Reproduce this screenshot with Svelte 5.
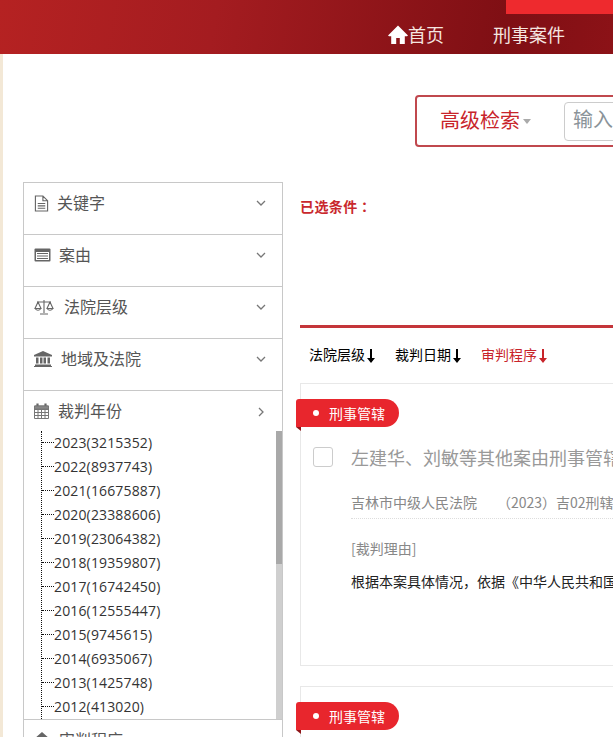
<script>
  const filters = [
    { label: '关键字', icon: 'file' },
    { label: '案由', icon: 'list' },
    { label: '法院层级', icon: 'scale' },
    { label: '地域及法院', icon: 'bank' }
  ];
  const years = [
    '2023(3215352)', '2022(8937743)', '2021(16675887)', '2020(23388606)',
    '2019(23064382)', '2018(19359807)', '2017(16742450)', '2016(12555447)',
    '2015(9745615)', '2014(6935067)', '2013(1425748)', '2012(413020)'
  ];
  const sorts = [
    { label: '法院层级', active: false },
    { label: '裁判日期', active: false },
    { label: '审判程序', active: true }
  ];
</script>

<div class="page">
  <header class="topbar">
    <div class="flag"></div>
    <nav class="nav">
      <a class="nav-home">
        <svg viewBox="0 0 20 19" width="20" height="19"><path d="M10 .5 0 10.500l1 .8h2.200V19h5v-6h3.600v6h5v-7.700H19l1-.8z" fill="#fff"/></svg>
        首页
      </a>
      <a>刑事案件</a>
    </nav>
  </header>

  <div class="search-row">
    <div class="search">
      <span class="search-type">高级检索<i class="caret"></i></span>
      <div class="search-input">输入案由、关键词、法院、当事人、律师</div>
    </div>
  </div>

  <div class="main">
    <aside class="side">
      {#each filters as f}
        <div class="filter">
          <span class="filter-icon {f.icon}">
            {#if f.icon === 'file'}
              <svg viewBox="0 0 16 18" width="15" height="17" fill="none" stroke="#666" stroke-width="1.2"><path d="M1.500 1h8l5 5v11h-13zM9.500 1v5h5M4 9h8M4 11.500h8M4 14h8"/></svg>
            {:else if f.icon === 'list'}
              <svg viewBox="0 0 17 14" width="17" height="14"><path d="M.5 1.500q0-1 1-1h14q1 0 1 1v11q0 1-1 1h-14q-1 0-1-1z" fill="#666"/><path d="M2 4h13v8H2z" fill="#fff"/><path d="M3 5.500h11M3 8h11M3 10.500h11" stroke="#666" stroke-width="1"/></svg>
            {:else if f.icon === 'scale'}
              <svg viewBox="0 0 20 16" width="20" height="16" fill="none" stroke="#666" stroke-width="1.100"><path d="M10 1v13M6 15h8M3 3h14M4 3 1 9.500h6zM16 3l-3 6.500h6zM1 9.500q3 3.500 6 0M13 9.500q3 3.500 6 0"/></svg>
            {:else}
              <svg viewBox="0 0 18 16" width="18" height="16" fill="#666"><path d="M9 0 18 4v1.500H0V4zM2 6.500h2.500v6H2zM6 6.500h2.500v6H6zM9.500 6.500H12v6H9.500zM13.500 6.500H16v6h-2.500zM1 13.500h16V15H1zM0 15h18v1H0z"/></svg>
            {/if}
          </span>
          <span class="filter-label">{f.label}</span>
          <svg class="chev" viewBox="0 0 10 6" width="10" height="6" fill="none" stroke="#777" stroke-width="1.300"><path d="M1 1l4 4 4-4"/></svg>
        </div>
      {/each}

      <div class="filter open">
        <div class="open-head">
          <span class="filter-icon cal">
            <svg viewBox="0 0 15 16" width="15" height="16" fill="none" stroke="#777" stroke-width="1"><path d="M.5 3h14v12.500H.5zM.5 6.500h14M.5 9.500h14M.5 12.500h14M4 6.500v9M7.500 6.500v9M11 6.500v9"/><path d="M3.500 .5v3.500M11.500 .5v3.500" stroke="#666" stroke-width="2.200"/><path d="M.5 3h14v3H.5z" fill="#888"/></svg>
          </span>
          <span class="filter-label">裁判年份</span>
          <svg class="chev" viewBox="0 0 6 10" width="6" height="10" fill="none" stroke="#777" stroke-width="1.300"><path d="M1 1l4 4-4 4"/></svg>
        </div>
        <div class="tree">
          <ul>
            {#each years as y}
              <li>{y}</li>
            {/each}
          </ul>
          <div class="scrollbar"><div class="thumb"></div></div>
        </div>
      </div>

      <div class="filter">
        <span class="filter-icon court">
          <svg viewBox="0 0 16 16" width="16" height="16" fill="#666"><path d="M8 0 16 7H0zM3 8h10v8H3z"/></svg>
        </span>
        <span class="filter-label">审判程序</span>
      </div>
    </aside>

    <section class="content">
      <div class="picked">已选条件<span class="colon">：</span></div>
      <div class="sorts">
        {#each sorts as s}
          <span class="sort" class:active={s.active}>{s.label}<svg viewBox="0 0 8 14" width="8" height="14"><path d="M3 0h2v9h3l-4 5-4-5h3z" fill="currentColor"/></svg></span>
        {/each}
      </div>

      <article class="card">
        <div class="tag"><i class="dot"></i>刑事管辖</div>
        <div class="title-row">
          <span class="check"></span>
          <span class="title">左建华、刘敏等其他案由刑事管辖申请书</span>
        </div>
        <div class="meta"><span>吉林市中级人民法院</span><span class="case-no">（2023）吉02刑辖66号</span></div>
        <div class="reason">[裁判理由]</div>
        <p class="body">根据本案具体情况，依据《中华人民共和国刑事诉讼法》的规定</p>
      </article>

      <article class="card">
        <div class="tag"><i class="dot"></i>刑事管辖</div>
      </article>
    </section>
  </div>
</div>

<style>
  :global(body) {
    margin: 0;
    background: #fff;
    overflow: hidden;
  }
  .page {
    width: 613px;
    height: 737px;
    overflow: hidden;
    font-family: "Noto Sans CJK SC", "Liberation Sans", sans-serif;
    background: linear-gradient(90deg, #f3e8d6 0, #f3e8d6 3px, #fff 3px);
  }
  .topbar {
    position: relative;
    height: 54px;
    background: linear-gradient(100deg, #b52222 0%, #a41c20 35%, #7f0f14 82%, #8c1217 100%);
    display: flex;
    justify-content: flex-start;
    padding-left: 388px;
  }
  .flag {
    position: absolute;
    top: 0;
    left: 506px;
    right: 0;
    height: 14px;
    background: #ee2a2e;
  }
  .nav {
    display: flex;
    align-items: center;
    gap: 49px;
    padding-top: 14px;
    height: 40px;
    color: #f5e6e0;
    font-size: 18px;
    white-space: nowrap;
  }
  .nav-home {
    display: flex;
    align-items: center;
  }
  .search-row {
    height: 128px;
    padding: 41px 0 0 415px;
    box-sizing: border-box;
    width: 1000px;
  }
  .search {
    display: flex;
    align-items: center;
    width: 560px;
    height: 52px;
    box-sizing: border-box;
    border: 2px solid #c0484e;
    border-radius: 4px;
    padding-left: 23px;
  }
  .search-type {
    width: 124px;
    flex: none;
    color: #c8242a;
    font-size: 20px;
    line-height: 26px;
    padding-bottom: 2px;
    display: flex;
    align-items: center;
  }
  .caret {
    margin: 2px 0 0 3px;
    border: 4.500px solid transparent;
    border-top: 5px solid #aaa;
    border-bottom: 0;
  }
  .search-input {
    flex: none;
    width: 400px;
    height: 39px;
    box-sizing: border-box;
    border: 1px solid #ccc;
    border-radius: 4px;
    padding-left: 8px;
    font-size: 20px;
    line-height: 31px;
    color: #8a9399;
    white-space: nowrap;
    overflow: hidden;
  }
  .main {
    display: flex;
    align-items: flex-start;
    padding-left: 23px;
    width: 1100px;
  }
  .side {
    flex: none;
    width: 260px;
    box-sizing: border-box;
    border: 1px solid #c8c8c8;
    border-bottom: 0;
    color: #555;
    font-size: 16px;
  }
  .filter {
    display: flex;
    align-items: flex-start;
    height: 52px;
    box-sizing: border-box;
    border-bottom: 1px solid #c8c8c8;
    padding: 8px 0 0 10px;
    position: relative;
  }
  .filter-icon {
    display: flex;
    align-items: center;
    justify-content: flex-start;
    height: 24px;
    margin-right: 8px;
  }
  .filter-icon.scale { margin-right: 10px; }
  .filter-icon.bank { margin-right: 9px; }
  .filter-icon.file { margin-right: 8px; }
  .filter-icon.cal { margin-right: 9px; }
  .filter-icon.court { margin-right: 9px; }
  .filter-label {
    line-height: 22px;
  }
  .chev {
    position: absolute;
    right: 16px;
    top: 17px;
  }
  .open {
    display: block;
    height: 329px;
    padding: 0;
  }
  .open-head {
    display: flex;
    align-items: flex-start;
    padding: 8px 0 0 10px;
    height: 40px;
    box-sizing: border-box;
    position: relative;
  }
  .open-head .chev { top: 16px; right: 18px; }
  .tree {
    position: relative;
    height: 288px;
    overflow: hidden;
  }
  .tree ul {
    list-style: none;
    margin: 0 0 0 17px;
    padding: 0;
    border-left: 1px dotted #111;
  }
  .tree li {
    height: 24px;
    line-height: 24px;
    padding-left: 12px;
    font-family: "Open Sans", "Noto Sans CJK SC", sans-serif;
    letter-spacing: .15px;
    font-size: 14px;
    color: #333;
    position: relative;
  }
  .tree li::before {
    content: "";
    position: absolute;
    left: 0;
    top: 11px;
    width: 12px;
    border-top: 1px dotted #111;
  }
  .scrollbar {
    position: absolute;
    top: 0;
    right: 0;
    bottom: 0;
    width: 6px;
    background: #cfcfcf;
  }
  .thumb {
    height: 133px;
    background: #a9a9a9;
  }
  .content {
    flex: none;
    width: 800px;
    margin-left: 17px;
  }
  .picked {
    margin-top: 14px;
    color: #c9282d;
    font-size: 14px;
    letter-spacing: .4px;
    font-weight: 700;
    line-height: 20px;
    height: 129px;
    border-bottom: 3px solid #c4353a;
    box-sizing: content-box;
  }
  .colon {
    font-family: "Noto Sans CJK TC", sans-serif;
  }
  .sorts {
    display: flex;
    gap: 20px;
    height: 55px;
    padding: 14px 0 0 9px;
    box-sizing: border-box;
    font-size: 14px;
    line-height: 22px;
    color: #000;
  }
  .sort {
    display: flex;
    align-items: center;
    height: 24px;
  }
  .sort svg { margin: 4px 0 0 2px; }
  .sort.active { color: #c8242a; }
  .card {
    position: relative;
    height: 283px;
    box-sizing: border-box;
    border: 1px solid #e8e8e8;
    margin-bottom: 20px;
    padding: 62px 0 0 12px;
  }
  .tag {
    position: absolute;
    left: -5px;
    top: 15px;
    width: 103px;
    height: 28px;
    box-sizing: border-box;
    background: #e8262d;
    border-radius: 3px 14px 14px 0;
    color: #fff;
    font-size: 14px;
    line-height: 26px;
    padding-left: 17px;
    display: flex;
    align-items: center;
  }
  .tag::after {
    content: "";
    position: absolute;
    left: 0;
    bottom: -4px;
    border-top: 4px solid #8f1418;
    border-left: 5px solid transparent;
  }
  .dot {
    width: 6px;
    height: 6px;
    border-radius: 50%;
    background: #fff;
    margin-right: 10px;
  }
  .title-row {
    display: flex;
    align-items: center;
    height: 22px;
    white-space: nowrap;
  }
  .check {
    flex: none;
    width: 20px;
    height: 20px;
    box-sizing: border-box;
    border: 1px solid #ccc;
    border-radius: 3px;
    margin-right: 18px;
  }
  .title {
    font-size: 18px;
    color: #999;
  }
  .meta {
    margin: 22px 0 0 38px;
    height: 28px;
    border-bottom: 1px dotted #ddd;
    font-size: 14px;
    line-height: 24px;
    color: #888;
    display: flex;
    white-space: nowrap;
  }
  .case-no {
    margin-left: 20px;
  }
  .reason {
    margin: 18px 0 0 38px;
    font-size: 14px;
    line-height: 22px;
    color: #888;
  }
  .body {
    margin: 11px 0 0 38px;
    font-size: 14px;
    line-height: 22px;
    color: #222;
    white-space: nowrap;
  }
</style>
